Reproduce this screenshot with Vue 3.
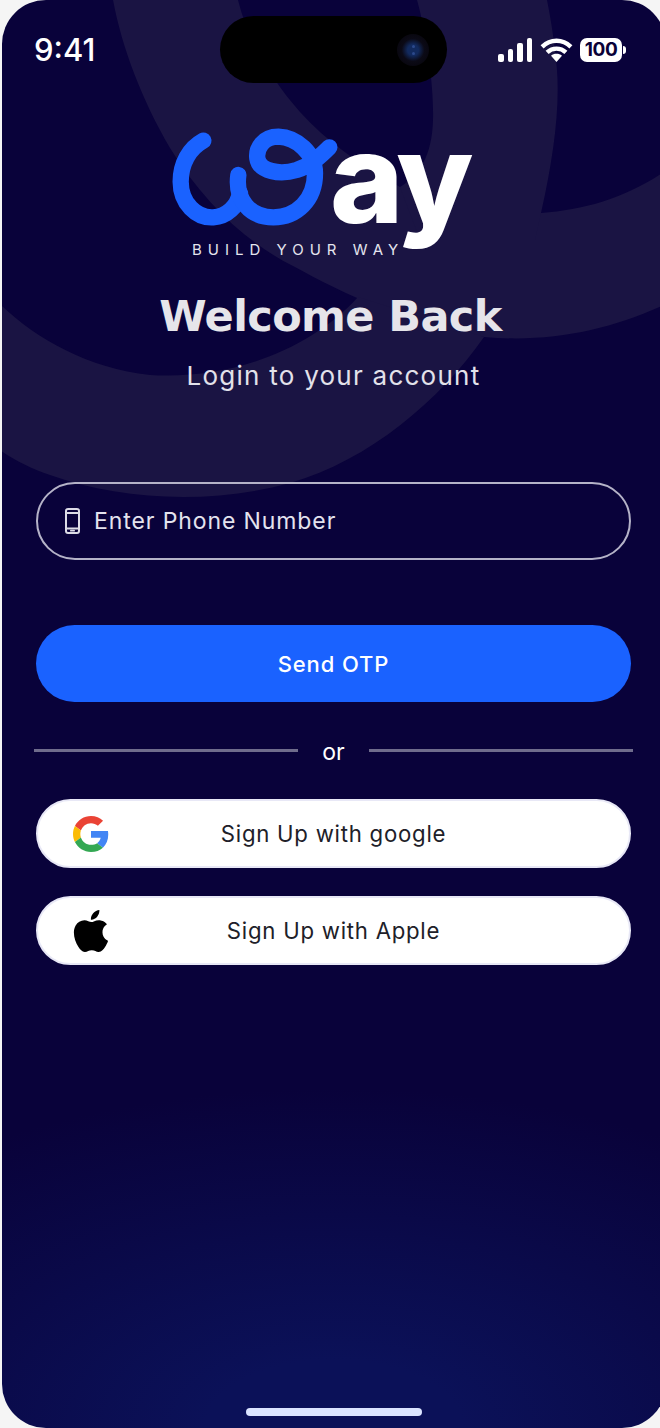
<script setup>
const bgPaths = [
  'M113 0C122 48 142 100 170 148C205 205 250 245 295 267C340 292 420 330 484 337C550 343 610 330 664 305V172C625 198 585 210 541 213C490 214 440 208 400 187C360 165 325 140 300 112C270 78 248 40 238 0Z',
  'M417 0C428 40 434 90 433 120C432 155 420 175 400 187L420 240L535 240L541 213C553 160 560 110 557 70C555 45 551 20 547 0Z',
  'M-4 300C30 335 85 368 150 375C230 380 310 350 358 297L484 337C440 400 370 460 290 483C210 505 120 500 50 475C30 468 10 458 -4 447Z'
]
const signalBars = [8, 13, 19, 24]
</script>

<template>
  <div class="screen">
    <svg class="watermark" viewBox="0 0 660 1428" aria-hidden="true">
      <path v-for="d in bgPaths" :key="d" :d="d" fill="#1a1443" />
    </svg>

    <header class="status">
      <span class="time">9:41</span>
      <div class="island">
        <span class="lens"><i></i><i></i></span>
      </div>
      <div class="status-icons">
        <div class="signal">
          <i v-for="h in signalBars" :key="h" :style="{ height: h + 'px' }"></i>
        </div>
        <svg class="wifi" viewBox="0 0 32 24">
          <path d="M16 24l-5.5-6.2c3.1-2.6 7.9-2.6 11 0z" fill="#fff" />
          <path d="M6.6 14.4C12 9.4 20 9.4 25.4 14.4" stroke="#fff" stroke-width="4.4" fill="none" />
          <path d="M1.6 8.8C10 .8 22 .8 30.4 8.8" stroke="#fff" stroke-width="4.4" fill="none" />
        </svg>
        <div class="battery"><span>100</span></div>
        <i class="nub"></i>
      </div>
    </header>

    <main class="content">
      <div class="logo">
        <svg class="mark" viewBox="0 0 1080 480" fill="none">
          <g stroke="#1a62ff" stroke-width="49" stroke-linecap="round">
            <path d="M160 92C118 115 92 160 92 215C92 280 140 325 190 322C230 320 262 290 270 250" />
            <path d="M265 195C255 270 300 322 370 322C440 322 495 270 495 190C495 130 440 82 385 80C340 80 318 115 322 145C328 185 390 195 440 180C485 165 515 135 538 112" />
          </g>
        </svg>
        <span class="ay">ay</span>
        <span class="tagline">BUILD YOUR WAY</span>
      </div>

      <h1 class="title">Welcome Back</h1>
      <p class="subtitle">Login to your account</p>

      <div class="field">
        <svg class="phone-icon" viewBox="0 0 15 26" fill="none">
          <rect x="1" y="1" width="13" height="24" rx="2" stroke="#dcdbe6" stroke-width="2" />
          <path d="M1 5h13M1 20.5h13" stroke="#dcdbe6" stroke-width="2" />
          <rect x="5" y="21.8" width="5" height="1.8" rx=".9" fill="#dcdbe6" />
        </svg>
        <span>Enter Phone Number</span>
      </div>

      <button class="primary">Send OTP</button>

      <div class="divider"><i></i><span>or</span><i></i></div>

      <button class="social">
        <svg class="social-icon google" viewBox="0 0 48 48">
          <path fill="#EA4335" d="M24 9.5c3.54 0 6.71 1.22 9.21 3.6l6.85-6.85C35.9 2.38 30.47 0 24 0 14.62 0 6.51 5.38 2.56 13.22l7.98 6.19C12.43 13.72 17.74 9.5 24 9.5z" />
          <path fill="#4285F4" d="M46.98 24.55c0-1.57-.15-3.09-.38-4.55H24v9.02h12.94c-.58 2.96-2.26 5.48-4.78 7.18l7.73 6c4.51-4.18 7.09-10.36 7.09-17.65z" />
          <path fill="#FBBC05" d="M10.53 28.59c-.48-1.45-.76-2.99-.76-4.59s.27-3.14.76-4.59l-7.98-6.19C.92 16.46 0 20.12 0 24c0 3.88.92 7.54 2.56 10.78l7.97-6.19z" />
          <path fill="#34A853" d="M24 48c6.48 0 11.93-2.13 15.89-5.81l-7.73-6c-2.15 1.45-4.92 2.3-8.16 2.3-6.26 0-11.57-4.22-13.47-9.91l-7.98 6.19C6.51 42.62 14.62 48 24 48z" />
        </svg>
        <span>Sign Up with google</span>
      </button>

      <button class="social">
        <svg class="social-icon apple" viewBox="0 0 24 24">
          <path fill="#000" d="M12.152 6.896c-.948 0-2.415-1.078-3.96-1.04-2.04.027-3.91 1.183-4.961 3.014-2.117 3.675-.546 9.103 1.519 12.09 1.013 1.454 2.208 3.09 3.792 3.039 1.52-.065 2.09-.987 3.935-.987 1.831 0 2.35.987 3.96.948 1.637-.026 2.676-1.48 3.676-2.948 1.156-1.688 1.636-3.325 1.662-3.415-.039-.013-3.182-1.221-3.22-4.857-.026-3.04 2.48-4.494 2.597-4.559-1.429-2.09-3.623-2.324-4.39-2.376-2-.156-3.675 1.09-4.61 1.09zM15.53 3.83c.843-1.012 1.4-2.427 1.245-3.83-1.207.052-2.662.805-3.532 1.818-.78.896-1.454 2.338-1.273 3.714 1.338.104 2.715-.688 3.559-1.701" />
        </svg>
        <span>Sign Up with Apple</span>
      </button>
    </main>

    <div class="home"></div>
  </div>
</template>

<style>
html, body { margin: 0; background: #f5f5f5; }
</style>

<style scoped>
.screen {
  position: relative;
  box-sizing: border-box;
  width: 664px;
  height: 1428px;
  margin-left: 2px;
  overflow: hidden;
  border-radius: 44px;
  background: radial-gradient(ellipse 640px 340px at 50% 100%, #0b1158 20%, rgba(11, 17, 88, 0)), #09023a;
  display: flex;
  flex-direction: column;
  font-family: Inter, "Liberation Sans", sans-serif;
}
.watermark {
  position: absolute;
  left: -2px;
  top: 0;
  width: 660px;
  height: 1428px;
}
.status {
  position: relative;
  display: flex;
  align-items: center;
  justify-content: space-between;
  box-sizing: border-box;
  width: 658px;
  height: 67px;
  margin-top: 16px;
  padding: 0 34px 0 32px;
}
.time { color: #fff; font-size: 31px; font-weight: 500; line-height: 1; margin-top: -1px; }
.island {
  position: absolute;
  left: 218px;
  top: 0;
  width: 227px;
  height: 67px;
  border-radius: 34px;
  background: #000;
}
.lens {
  position: absolute;
  left: 177px;
  top: 18px;
  width: 32px;
  height: 32px;
  border-radius: 50%;
  background: radial-gradient(circle, #122a5e 0 24%, #0b0a16 50%, #050307 100%);
  display: flex;
  flex-direction: column;
  align-items: center;
  justify-content: center;
  gap: 4px;
}
.lens i { display: block; width: 3px; height: 3px; border-radius: 50%; background: #2c4a8c; }
.status-icons { display: flex; align-items: center; height: 24px; }
.signal { display: flex; align-items: flex-end; gap: 4px; height: 24px; }
.signal i { display: block; width: 5.5px; border-radius: 2px; background: #fff; }
.wifi { width: 33px; height: 24px; margin-left: 8px; }
.battery {
  width: 42px;
  height: 24px;
  margin-left: 7px;
  border-radius: 7px;
  background: #fff;
  display: flex;
  align-items: center;
  justify-content: center;
}
.battery span { color: #0a0238; font-size: 19px; font-weight: 700; line-height: 1; letter-spacing: -.4px; }
.nub { display: block; width: 3px; height: 8px; margin-left: 1px; border-radius: 0 3px 3px 0; background: #fff; }

.content {
  position: relative;
  box-sizing: border-box;
  width: 595px;
  margin-left: 34px;
  display: flex;
  flex-direction: column;
  align-items: center;
}
.logo { position: relative; width: 360px; height: 160px; margin: 27px 7px 0 0; flex: none; }
.mark { display: block; width: 360px; height: 160px; }
.ay {
  position: absolute;
  left: 180px;
  top: 5px;
  color: #fff;
  font-family: Inter, "Liberation Sans", sans-serif;
  font-size: 125px;
  font-weight: 800;
  line-height: 1;
  letter-spacing: -5px;
}
.tagline {
  position: absolute;
  left: 42px;
  top: 131px;
  color: #e4e4ee;
  font-size: 15px;
  font-weight: 400;
  letter-spacing: 6px;
  line-height: 18px;
  white-space: nowrap;
}
.title {
  margin: 21px 6px 0 0;
  color: #e6e5ea;
  font-family: "DejaVu Sans", sans-serif;
  font-size: 43px;
  font-weight: 700;
  line-height: 50px;
  letter-spacing: -.6px;
  white-space: nowrap;
}
.subtitle {
  margin: 20px 0 0;
  color: #e2e1ea;
  font-size: 26px;
  font-weight: 400;
  line-height: 30px;
  letter-spacing: 1.25px;
}
.field {
  box-sizing: border-box;
  width: 100%;
  height: 78px;
  margin-top: 91px;
  padding-left: 27px;
  border: 2px solid #b5b3c8;
  border-radius: 39px;
  display: flex;
  align-items: center;
  gap: 14px;
  color: #e4e3ee;
  font-size: 23px;
  letter-spacing: .9px;
}
.phone-icon { width: 15px; height: 26px; flex: none; }
.primary {
  width: 100%;
  height: 77px;
  margin-top: 65px;
  padding: 0;
  border: 0;
  border-radius: 39px;
  background: #1a62ff;
  color: #fff;
  font-family: inherit;
  font-size: 22px;
  font-weight: 500;
  letter-spacing: .9px;
}
.divider {
  box-sizing: border-box;
  width: 599px;
  margin-top: 34px;
  display: flex;
  align-items: center;
  gap: 24px;
  color: #fff;
  font-size: 23px;
  line-height: 32px;
}
.divider i { display: block; flex: 1; height: 3px; background: #6f6c8c; margin-top: -4px; }
.social {
  position: relative;
  box-sizing: border-box;
  width: 100%;
  height: 69px;
  margin-top: 28px;
  padding: 0;
  border: 2px solid #e8e8f6;
  border-radius: 35px;
  background: #fff;
  color: #202028;
  font-family: inherit;
  font-size: 22.2px;
  letter-spacing: .75px;
}
.divider + .social { margin-top: 31px; }
.social-icon { position: absolute; top: 50%; }
.google { left: 35px; width: 36px; height: 36px; margin-top: -18px; }
.apple { left: 32px; width: 42px; height: 42px; margin-top: -21px; }
.home {
  position: absolute;
  left: 244px;
  top: 1408px;
  width: 176px;
  height: 8px;
  border-radius: 4px;
  background: #dbe4ff;
}
</style>
